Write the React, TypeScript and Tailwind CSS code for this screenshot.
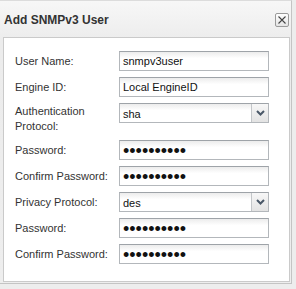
import React from "react";

const fields: { label: string; value: string; kind: "text" | "password" | "select"; twoLine?: boolean }[] = [
  { label: "User Name:", value: "snmpv3user", kind: "text" },
  { label: "Engine ID:", value: "Local EngineID", kind: "text" },
  { label: "Authentication Protocol:", value: "sha", kind: "select", twoLine: true },
  { label: "Password:", value: "", kind: "password" },
  { label: "Confirm Password:", value: "", kind: "password" },
  { label: "Privacy Protocol:", value: "des", kind: "select" },
  { label: "Password:", value: "", kind: "password" },
  { label: "Confirm Password:", value: "", kind: "password" },
];

function Field({ value, kind }: { value: string; kind: string }) {
  return (
    <div className="flex shrink-0 h-[20px] w-[150px] border border-[#b3b7bb] border-t-[#9ea3a8] bg-[linear-gradient(to_bottom,#ececec,#ffffff_35%,#ffffff)]">
      <div className="flex-1 flex items-center pl-[3px] text-[11px] text-[#111]">
        {kind === "password" ? (
          <span className="text-[18px] leading-[18px] pt-[1px]">••••••••••</span>
        ) : (
          <span className={kind === "select" ? "pt-[2px]" : ""}>{value}</span>
        )}
      </div>
      {kind === "select" && (
        <div className="w-[17px] flex items-center justify-center border-l border-[#c3c6c9] bg-[linear-gradient(to_bottom,#f7f7f7,#e3e3e3)]">
          <svg width="9" height="6" viewBox="0 0 9 6">
            <path d="M1 1 L4.5 4.5 L8 1" fill="none" stroke="#4a5868" strokeWidth="2" />
          </svg>
        </div>
      )}
    </div>
  );
}

export default function App() {
  return (
    <div className="w-[296px] h-[289px] bg-[#ededed] overflow-hidden" style={{ fontFamily: '"Liberation Sans", Arial, sans-serif' }}>
      {/* Dialog */}
      <div className="w-[292px] h-[284px] border-r border-b border-[#c4c4c4] border-t border-t-[#dcdcdc] bg-[linear-gradient(to_bottom,#f7f7f7,#ececec_40px,#eeeeee)]">
        {/* Title bar */}
        <div className="h-[36px] flex items-center justify-between pl-[4px] pr-[2px]">
          <span className="text-[12px] font-bold text-[#333] pt-[2px]">Add SNMPv3 User</span>
          <div className="w-[14px] h-[14px] mt-[2px] border border-[#9a9a9a] rounded-[2px] bg-[linear-gradient(to_bottom,#ffffff,#e4e4e4)] flex items-center justify-center">
            <svg width="8" height="8" viewBox="0 0 8 8">
              <path d="M0.5 0.5 L7.5 7.5 M7.5 0.5 L0.5 7.5" stroke="#444" strokeWidth="1.1" />
            </svg>
          </div>
        </div>

        {/* Form panel */}
        <div className="ml-[3px] w-[287px] h-[245px] bg-white border border-[#cacaca] pt-[13px] pl-[11px]">
          <div className="flex flex-col gap-[6px]">
            {fields.map((f, i) => (
              <div key={i} className="flex items-start">
                <div className="w-[104px] shrink-0">
                  <div
                    className={
                      "text-[11px] text-[#333] " +
                      (f.twoLine ? "w-[80px] leading-[15px] pt-[1px]" : "leading-[20px]")
                    }
                  >
                    {f.label}
                  </div>
                </div>
                <Field value={f.value} kind={f.kind} />
              </div>
            ))}
          </div>
        </div>
      </div>
    </div>
  );
}
